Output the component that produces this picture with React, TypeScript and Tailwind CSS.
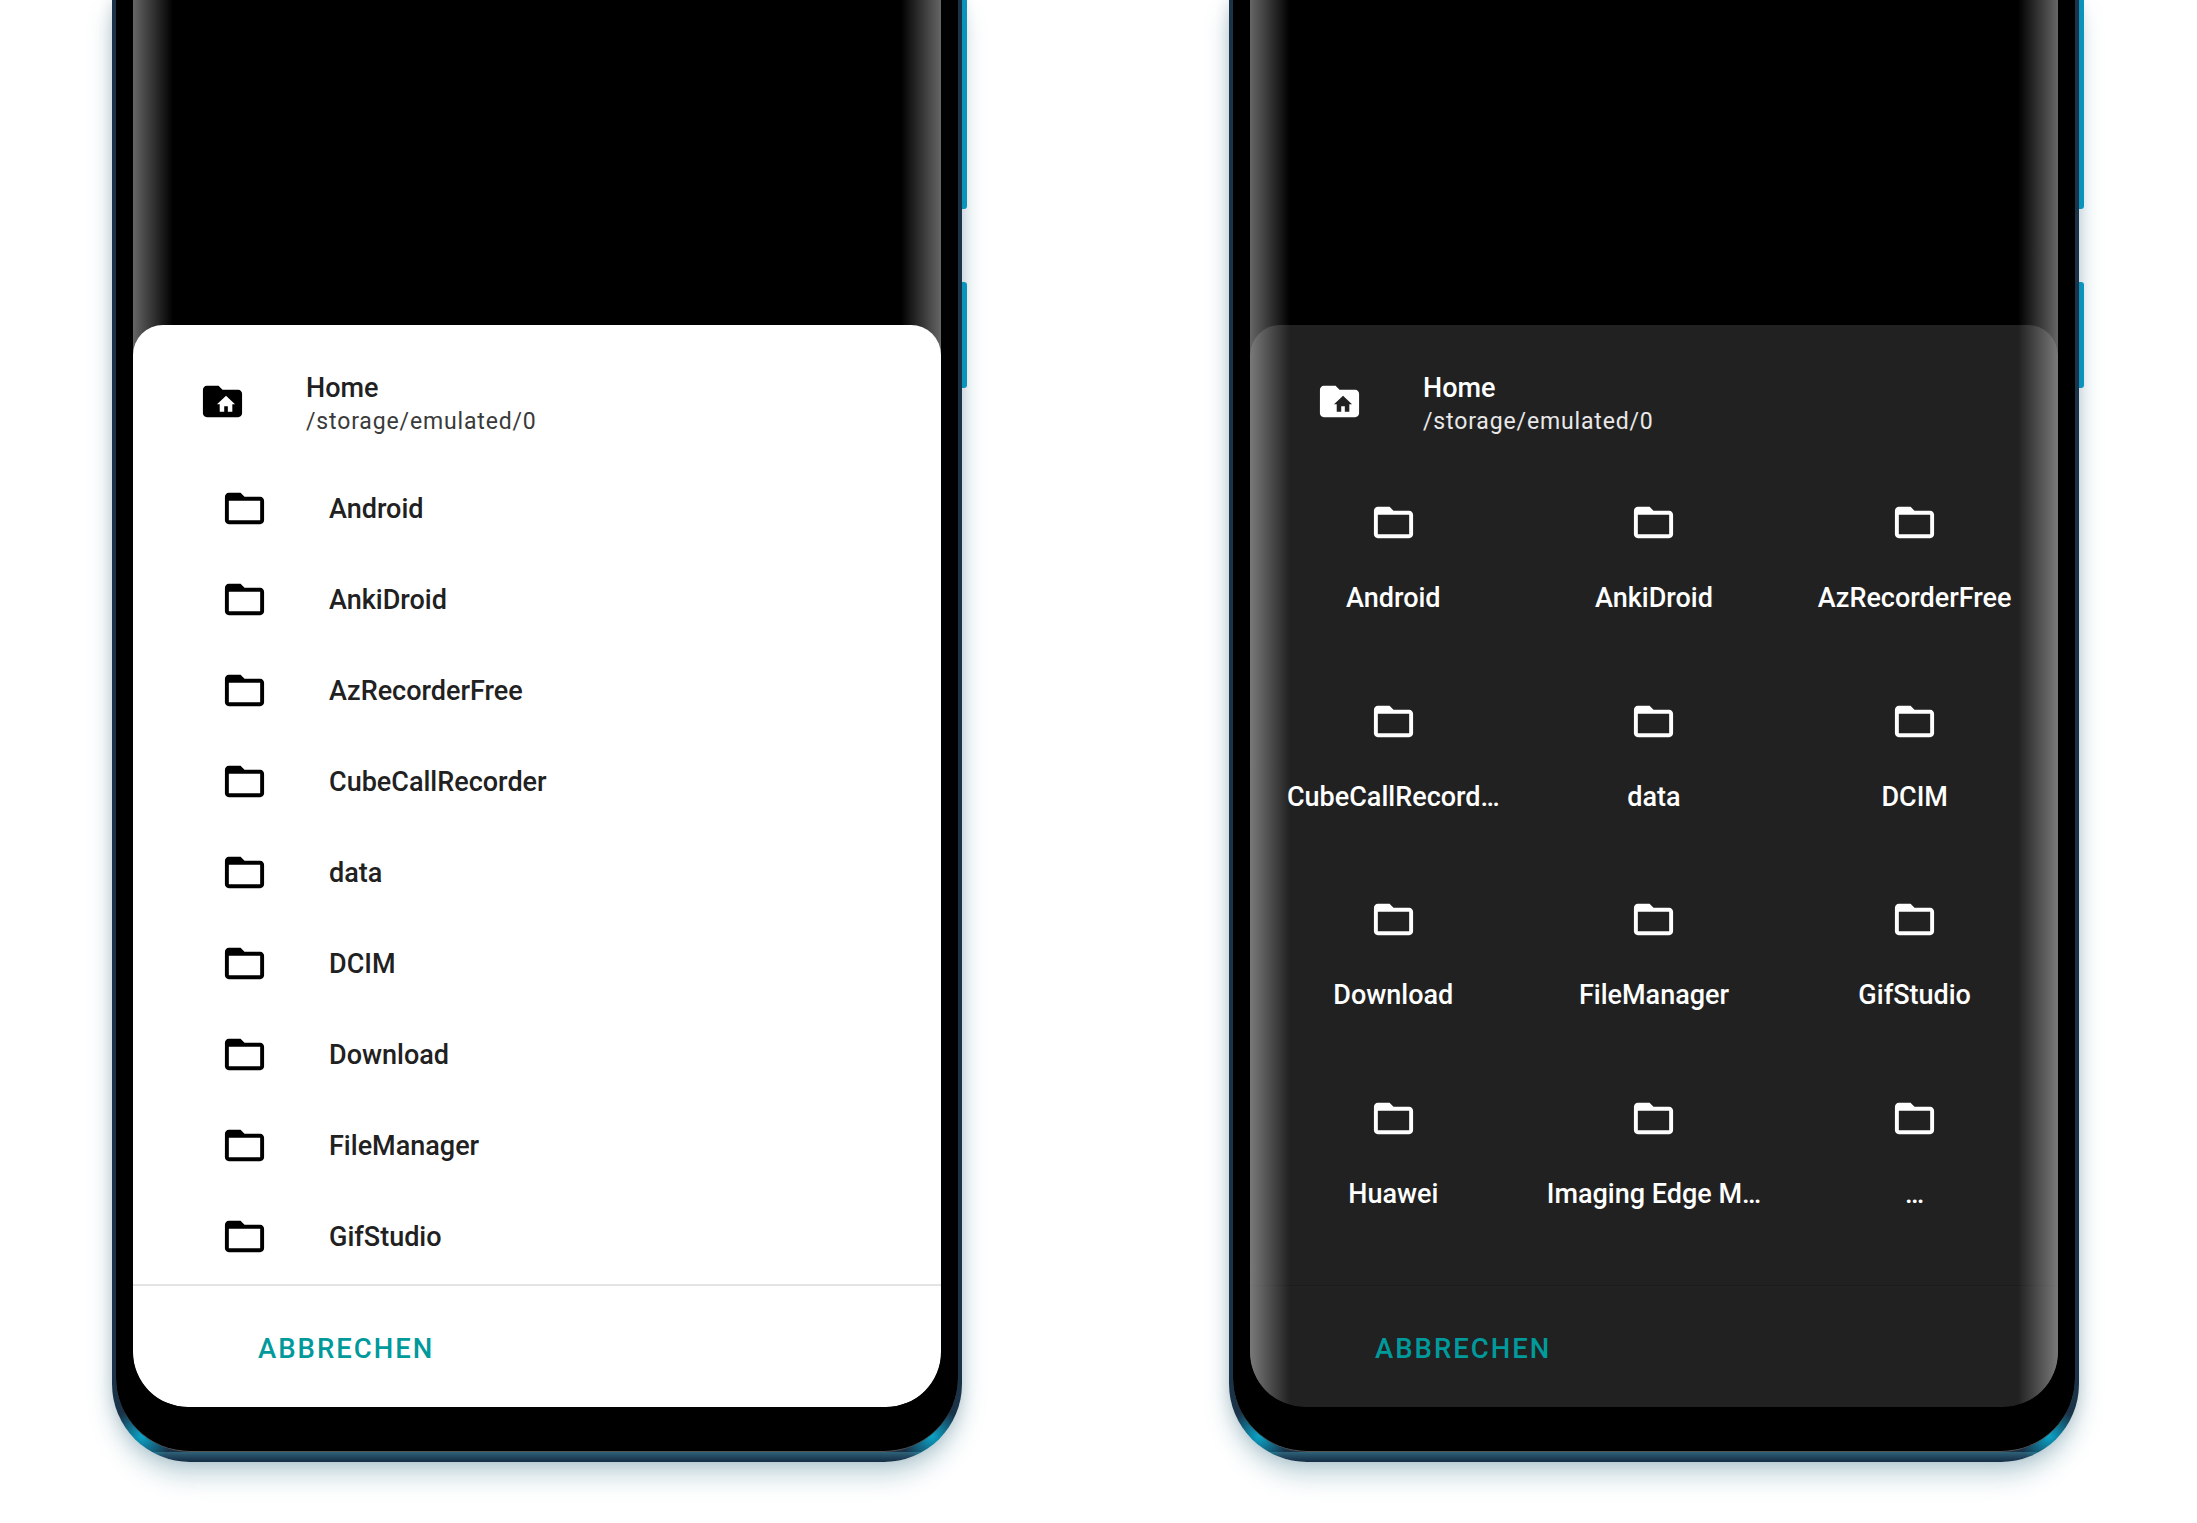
const LIST_ITEMS = ['Android', 'AnkiDroid', 'AzRecorderFree', 'CubeCallRecorder', 'data', 'DCIM', 'Download', 'FileManager', 'GifStudio'];
const GRID_ITEMS = ['Android', 'AnkiDroid', 'AzRecorderFree', 'CubeCallRecord…', 'data', 'DCIM', 'Download', 'FileManager', 'GifStudio', 'Huawei', 'Imaging Edge M…', '…'];

function FolderIcon({ className }: { className: string }) {
  return (
    <svg viewBox="0 0 24 24" className={className} fill="currentColor">
      <path d="M20 6h-8l-2-2H4c-1.1 0-1.99.9-1.99 2L2 18c0 1.1.9 2 2 2h16c1.1 0 2-.9 2-2V8c0-1.1-.9-2-2-2zm0 12H4V8h16v10z" />
    </svg>
  );
}

function HomeFolderIcon({ className, houseClass }: { className: string; houseClass: string }) {
  return (
    <svg viewBox="0 0 24 24" className={className} fill="currentColor">
      <path d="M10 4H4c-1.1 0-1.99.9-1.99 2L2 18c0 1.1.9 2 2 2h16c1.1 0 2-.9 2-2V8c0-1.1-.9-2-2-2h-8l-2-2z" />
      <path className={houseClass} transform="translate(8.28 7.66) scale(0.46 0.48)" d="M10 20v-6h4v6h5v-8h3L12 3 2 12h3v8z" />
    </svg>
  );
}

function EdgeGlow() {
  return (
    <>
      <div className="pointer-events-none absolute inset-y-0 left-0 w-[40px] bg-linear-to-r from-white/40 to-transparent" />
      <div className="pointer-events-none absolute inset-y-0 right-0 w-[40px] bg-linear-to-l from-white/40 to-transparent" />
    </>
  );
}

function Header({ dark }: { dark: boolean }) {
  return (
    <div className="relative flex h-[138px] items-center pt-[14px] pl-[66px]">
      <HomeFolderIcon
        className={`h-[47px] w-[47px] shrink-0 ${dark ? 'text-white' : 'text-black'}`}
        houseClass={dark ? 'fill-[#212121]' : 'fill-white'}
      />
      <div className="mt-[6px] ml-[60px]">
        <div className={`text-[27px] leading-[35px] font-medium ${dark ? 'text-white' : 'text-[#212121]'}`}>Home</div>
        <div className={`text-[23px] leading-[32px] tracking-[0.85px] ${dark ? 'text-white/90' : 'text-[#3a3a3a]'}`}>/storage/emulated/0</div>
      </div>
    </div>
  );
}

function Footer({ dark }: { dark: boolean }) {
  return (
    <div className="relative">
      <div className={dark ? 'h-px bg-[#1c1c1c]' : 'h-[2px] bg-[#e4e4e4]'} />
      <div className="flex h-[121px] items-center pt-[4px] pl-[125px] text-[27.5px] font-medium tracking-[2px] text-[#009a9c]">ABBRECHEN</div>
    </div>
  );
}

function Phone({ children }: { children: React.ReactNode }) {
  return (
    <div className="relative h-[1462px] w-[850px] shrink-0 rounded-b-[78px] bg-[radial-gradient(circle_30px_at_30px_calc(100%-26px),#0aa4c8,transparent),radial-gradient(circle_30px_at_calc(100%-30px)_calc(100%-26px),#0aa4c8,transparent),linear-gradient(to_bottom,#1a3349_calc(100%-10px),#2f6279_calc(100%-10px),#142c44_100%)] px-1 pb-[10px] shadow-[0_14px_24px_rgba(70,130,150,0.32),0_0_14px_rgba(60,80,100,0.2)]">
      <div className="absolute top-0 right-[-5px] h-[209px] w-[5px] rounded-br-[3px] bg-[#0a94bb]" />
      <div className="absolute top-[282px] right-[-5px] h-[106px] w-[5px] rounded-r-[3px] bg-[#0a94bb]" />
      <div className="h-full rounded-b-[74px] border-b border-[#555555] bg-black px-[17px]">
        <div className="relative h-[1407px] overflow-hidden rounded-b-[55px] bg-black pt-[325px]">
          <EdgeGlow />
          {children}
        </div>
      </div>
    </div>
  );
}

export default function App() {
  return (
    <div className="flex gap-[267px] bg-white pt-0 pb-[61px] pl-[112px] font-['Roboto',sans-serif]">
      <Phone>
        <div className="relative flex h-[1082px] flex-col overflow-hidden rounded-t-[30px] rounded-b-[55px] bg-white">
          <Header dark={false} />
          <div className="flex-1">
            {LIST_ITEMS.map(name => (
              <div key={name} className="flex h-[91px] items-center pl-[88px]">
                <FolderIcon className="h-[47px] w-[47px] shrink-0 text-black" />
                <span className="mt-[2px] ml-[61px] text-[27px] font-medium text-[#212121]">{name}</span>
              </div>
            ))}
          </div>
          <Footer dark={false} />
        </div>
      </Phone>

      <Phone>
        <div className="relative flex h-[1082px] flex-col overflow-hidden rounded-t-[30px] rounded-b-[55px] bg-[#212121]">
          <Header dark />
          <div className="relative grid flex-1 grid-cols-3 content-start px-[13px] pt-[27px]">
            {GRID_ITEMS.map((name, i) => (
              <div key={i} className="flex h-[198.5px] flex-col items-center pt-[9px]">
                <FolderIcon className="h-[47px] w-[47px] text-white" />
                <span className="mt-[32px] text-[27px] leading-[40px] font-medium whitespace-nowrap text-white">{name}</span>
              </div>
            ))}
          </div>
          <Footer dark />
          <EdgeGlow />
        </div>
      </Phone>
    </div>
  );
}
